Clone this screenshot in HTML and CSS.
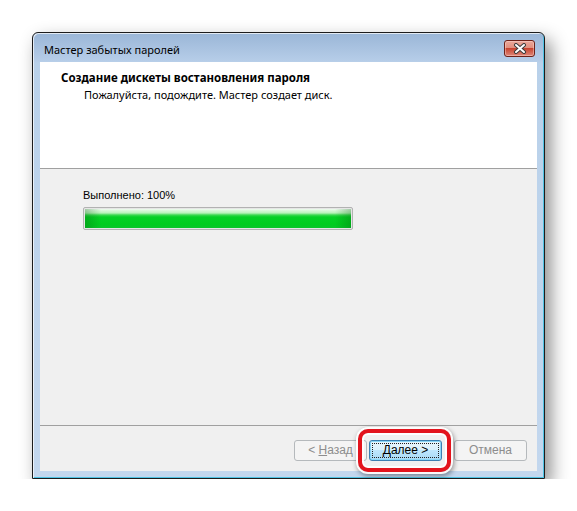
FILE: index.html
```html
<!DOCTYPE html>
<html lang="ru">
    <head>
        <meta charset="UTF-8">
        <meta name="viewport" content="width=device-width, initial-scale=1.0">
        <title>Мастер забытых паролей</title>
        <link rel="stylesheet" href="styles.css">
    </head>

    <body>
        <div class="window">
            <div class="titlebar">
                <span class="title">Мастер забытых паролей</span>
                <button class="close-button" type="button" aria-label="Закрыть">
                    <svg width="14" height="11" viewBox="0 0 14 11">
                        <path d="M3 2 L11 9 M11 2 L3 9" stroke="#3b3b3b" stroke-width="4" stroke-linecap="round"/>
                        <path d="M3 2 L11 9 M11 2 L3 9" stroke="#ffffff" stroke-width="2" stroke-linecap="round"/>
                    </svg>
                </button>
            </div>

            <div class="client">
                <div class="header">
                    <h1 class="header-title">Создание дискеты востановления пароля</h1>
                    <p class="header-text">Пожалуйста, подождите. Мастер создает диск.</p>
                </div>

                <div class="content">
                    <p class="progress-label">Выполнено: 100%</p>
                    <div class="progress">
                        <div class="progress-fill" style="width: 100%"></div>
                    </div>
                </div>

                <div class="footer">
                    <div class="button-group">
                        <button class="button disabled" type="button">&lt; <u>Н</u>азад</button>
                        <div class="highlight-wrap">
                            <button class="button default" type="button"><span class="focus-ring"><u>Д</u>алее &gt;</span></button>
                            <div class="highlight"></div>
                        </div>
                    </div>
                    <button class="button disabled" type="button">Отмена</button>
                </div>
            </div>
        </div>
    </body>
</html>
```

FILE: styles.css
```css
body {
    margin: 0;
    padding: 32px 0 0 32px;
    background: #ffffff;
    font-family: "Noto Sans", "DejaVu Sans", sans-serif;
    font-size: 11px;
    color: #000000;
}

.window {
    display: flex;
    flex-direction: column;
    box-sizing: border-box;
    width: 513px;
    height: 447px;
    padding: 0 7px 7px 7px;
    border: 1px solid #1c1c1c;
    border-radius: 6px 6px 0 0;
    background: linear-gradient(to bottom, #9ab6d7 0, #b6cde8 28px, #b9d1ea 30px, #c3d7ee 100%);
    box-shadow: inset 1px 1px 0 rgba(255, 255, 255, 0.7),
                inset -1px -1px 0 #4fc3e4,
                6px 8px 18px rgba(0, 0, 0, 0.45);
}

.titlebar {
    display: flex;
    align-items: center;
    justify-content: space-between;
    height: 29px;
    padding-left: 4px;
}

.title {
    margin-top: 3px;
    font-size: 11px;
    color: #000000;
}

.close-button {
    display: flex;
    align-items: center;
    justify-content: center;
    width: 31px;
    height: 17px;
    margin: 2px 2px 0 0;
    padding: 0;
    border: 1px solid #6e2219;
    border-radius: 3px;
    background: linear-gradient(to bottom, #eba89b 0, #e28f7e 45%, #c94430 50%, #d0604d 70%, #e0877a 100%);
    box-shadow: inset 0 0 0 1px rgba(255, 220, 210, 0.45);
}

.client {
    display: flex;
    flex-direction: column;
    flex: 1;
    background: #f0f0f0;
}

.header {
    height: 107px;
    padding: 8px 0 0 21px;
    box-sizing: border-box;
    background: #ffffff;
    border-bottom: 1px solid #a0a0a0;
}

.header-title {
    margin: 0;
    font-size: 11.5px;
    font-weight: bold;
    line-height: 16px;
}

.header-text {
    margin: 1px 0 0 23px;
    line-height: 16px;
}

.content {
    flex: 1;
    padding: 18px 0 0 43px;
}

.progress-label {
    margin: 0 0 4px 0;
    font-family: "Liberation Sans", Arial, sans-serif;
    line-height: 16px;
}

.progress {
    width: 270px;
    height: 23px;
    box-sizing: border-box;
    border: 1px solid #b2b2b2;
    border-radius: 2px;
    background: #e6e6e6;
    padding: 1px;
}

.progress-fill {
    height: 100%;
    background: linear-gradient(to right, rgba(0, 90, 10, 0.3) 0, rgba(0, 90, 10, 0) 16px, rgba(0, 90, 10, 0) calc(100% - 16px), rgba(0, 90, 10, 0.3) 100%),
                linear-gradient(to bottom, #eefbee 0, #b8f2ba 4px, #3bd850 6px, #05d025 8px, #00cd1f 80%, #0ac52a 100%);
}

.footer {
    display: flex;
    justify-content: flex-end;
    align-items: flex-start;
    gap: 12px;
    height: 46px;
    padding: 14px 10px 0 0;
    box-sizing: border-box;
    border-top: 1px solid #a0a0a0;
}

.button-group {
    display: flex;
    gap: 2px;
}

.button {
    width: 73px;
    height: 21px;
    padding: 0;
    border-radius: 3px;
    font-family: "Liberation Sans", Arial, sans-serif;
    font-size: 12px;
    line-height: 17px;
}

.button.disabled {
    border: 1px solid #b5b9bc;
    background: #f4f4f4;
    color: #8d8d8d;
}

.button.default {
    display: flex;
    padding: 2px;
    border: 1px solid #3c7fb1;
    background: linear-gradient(to bottom, #eaf6fd 0, #d9f0fc 50%, #bee6fd 50%, #a7d9f5 100%);
    box-shadow: inset 0 0 0 1px #8ad6f7;
    color: #000000;
}

.focus-ring {
    flex: 1;
    border: 1px dotted #222222;
    line-height: 13px;
}

.highlight-wrap {
    position: relative;
}

.highlight {
    position: absolute;
    top: -11px;
    left: -11px;
    right: -9px;
    bottom: -11px;
    border: 4px solid #e3141d;
    border-radius: 10px;
    box-shadow: inset 0 0 0 2px rgba(255, 255, 255, 0.9),
                0 0 0 2px rgba(255, 255, 255, 0.95),
                1px 2px 5px 2px rgba(0, 0, 0, 0.4);
    pointer-events: none;
}
```
